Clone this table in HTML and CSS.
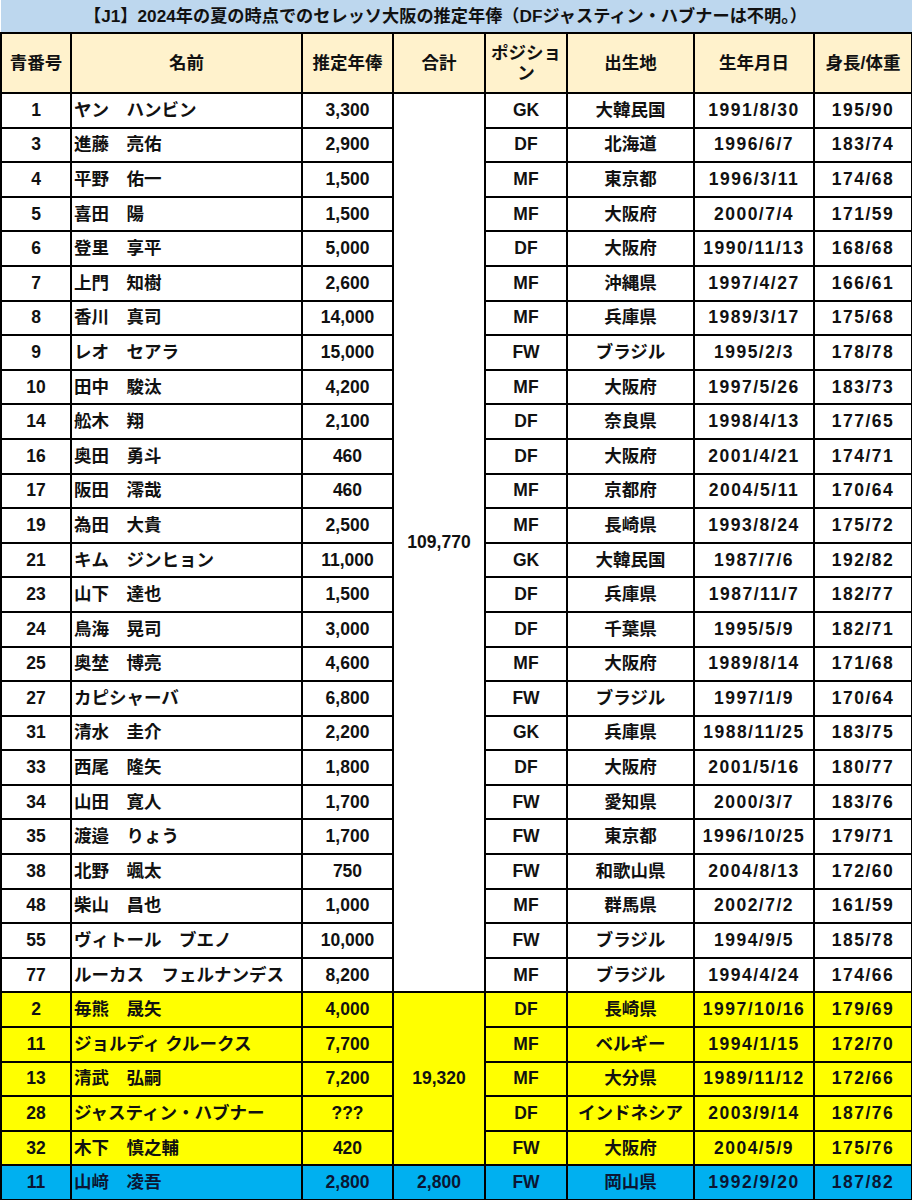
FILE: index.html
```html
<!DOCTYPE html>
<html lang="ja">
<head>
<meta charset="utf-8">
<title>セレッソ大阪 推定年俸</title>
<link rel="stylesheet" href="styles.css">
</head>
<body>
<table class="sheet">
<colgroup>
<col class="c1"><col class="c2"><col class="c3"><col class="c4"><col class="c5"><col class="c6"><col class="c7"><col class="c8">
</colgroup>
<thead>
<tr class="title-row"><th colspan="8" class="title">【J1】2024年の夏の時点でのセレッソ大阪の推定年俸（DFジャスティン・ハブナーは不明。）</th></tr>
<tr class="head-row">
<th>青番号</th><th>名前</th><th>推定年俸</th><th>合計</th><th class="pos">ポジショ<br>ン</th><th>出生地</th><th>生年月日</th><th>身長/体重</th>
</tr>
</thead>
<tbody>
<tr><td>1</td><td class="name">ヤン　ハンビン</td><td>3,300</td><td rowspan="26" class="total">109,770</td><td>GK</td><td>大韓民国</td><td class="num">1991/8/30</td><td class="num">195/90</td></tr>
<tr><td>3</td><td class="name">進藤　亮佑</td><td>2,900</td><td>DF</td><td>北海道</td><td class="num">1996/6/7</td><td class="num">183/74</td></tr>
<tr><td>4</td><td class="name">平野　佑一</td><td>1,500</td><td>MF</td><td>東京都</td><td class="num">1996/3/11</td><td class="num">174/68</td></tr>
<tr><td>5</td><td class="name">喜田　陽</td><td>1,500</td><td>MF</td><td>大阪府</td><td class="num">2000/7/4</td><td class="num">171/59</td></tr>
<tr><td>6</td><td class="name">登里　享平</td><td>5,000</td><td>DF</td><td>大阪府</td><td class="num">1990/11/13</td><td class="num">168/68</td></tr>
<tr><td>7</td><td class="name">上門　知樹</td><td>2,600</td><td>MF</td><td>沖縄県</td><td class="num">1997/4/27</td><td class="num">166/61</td></tr>
<tr><td>8</td><td class="name">香川　真司</td><td>14,000</td><td>MF</td><td>兵庫県</td><td class="num">1989/3/17</td><td class="num">175/68</td></tr>
<tr><td>9</td><td class="name">レオ　セアラ</td><td>15,000</td><td>FW</td><td>ブラジル</td><td class="num">1995/2/3</td><td class="num">178/78</td></tr>
<tr><td>10</td><td class="name">田中　駿汰</td><td>4,200</td><td>MF</td><td>大阪府</td><td class="num">1997/5/26</td><td class="num">183/73</td></tr>
<tr><td>14</td><td class="name">舩木　翔</td><td>2,100</td><td>DF</td><td>奈良県</td><td class="num">1998/4/13</td><td class="num">177/65</td></tr>
<tr><td>16</td><td class="name">奥田　勇斗</td><td>460</td><td>DF</td><td>大阪府</td><td class="num">2001/4/21</td><td class="num">174/71</td></tr>
<tr><td>17</td><td class="name">阪田　澪哉</td><td>460</td><td>MF</td><td>京都府</td><td class="num">2004/5/11</td><td class="num">170/64</td></tr>
<tr><td>19</td><td class="name">為田　大貴</td><td>2,500</td><td>MF</td><td>長崎県</td><td class="num">1993/8/24</td><td class="num">175/72</td></tr>
<tr><td>21</td><td class="name">キム　ジンヒョン</td><td>11,000</td><td>GK</td><td>大韓民国</td><td class="num">1987/7/6</td><td class="num">192/82</td></tr>
<tr><td>23</td><td class="name">山下　達也</td><td>1,500</td><td>DF</td><td>兵庫県</td><td class="num">1987/11/7</td><td class="num">182/77</td></tr>
<tr><td>24</td><td class="name">鳥海　晃司</td><td>3,000</td><td>DF</td><td>千葉県</td><td class="num">1995/5/9</td><td class="num">182/71</td></tr>
<tr><td>25</td><td class="name">奥埜　博亮</td><td>4,600</td><td>MF</td><td>大阪府</td><td class="num">1989/8/14</td><td class="num">171/68</td></tr>
<tr><td>27</td><td class="name">カピシャーバ</td><td>6,800</td><td>FW</td><td>ブラジル</td><td class="num">1997/1/9</td><td class="num">170/64</td></tr>
<tr><td>31</td><td class="name">清水　圭介</td><td>2,200</td><td>GK</td><td>兵庫県</td><td class="num">1988/11/25</td><td class="num">183/75</td></tr>
<tr><td>33</td><td class="name">西尾　隆矢</td><td>1,800</td><td>DF</td><td>大阪府</td><td class="num">2001/5/16</td><td class="num">180/77</td></tr>
<tr><td>34</td><td class="name">山田　寛人</td><td>1,700</td><td>FW</td><td>愛知県</td><td class="num">2000/3/7</td><td class="num">183/76</td></tr>
<tr><td>35</td><td class="name">渡邉　りょう</td><td>1,700</td><td>FW</td><td>東京都</td><td class="num">1996/10/25</td><td class="num">179/71</td></tr>
<tr><td>38</td><td class="name">北野　颯太</td><td>750</td><td>FW</td><td>和歌山県</td><td class="num">2004/8/13</td><td class="num">172/60</td></tr>
<tr><td>48</td><td class="name">柴山　昌也</td><td>1,000</td><td>MF</td><td>群馬県</td><td class="num">2002/7/2</td><td class="num">161/59</td></tr>
<tr><td>55</td><td class="name">ヴィトール　ブエノ</td><td>10,000</td><td>FW</td><td>ブラジル</td><td class="num">1994/9/5</td><td class="num">185/78</td></tr>
<tr><td>77</td><td class="name">ルーカス　フェルナンデス</td><td>8,200</td><td>MF</td><td>ブラジル</td><td class="num">1994/4/24</td><td class="num">174/66</td></tr>
<tr class="new"><td>2</td><td class="name">毎熊　晟矢</td><td>4,000</td><td rowspan="5" class="total">19,320</td><td>DF</td><td>長崎県</td><td class="num">1997/10/16</td><td class="num">179/69</td></tr>
<tr class="new"><td>11</td><td class="name">ジョルディ クルークス</td><td>7,700</td><td>MF</td><td>ベルギー</td><td class="num">1994/1/15</td><td class="num">172/70</td></tr>
<tr class="new"><td>13</td><td class="name">清武　弘嗣</td><td>7,200</td><td>MF</td><td>大分県</td><td class="num">1989/11/12</td><td class="num">172/66</td></tr>
<tr class="new"><td>28</td><td class="name">ジャスティン・ハブナー</td><td>???</td><td>DF</td><td>インドネシア</td><td class="num">2003/9/14</td><td class="num">187/76</td></tr>
<tr class="new"><td>32</td><td class="name">木下　慎之輔</td><td>420</td><td>FW</td><td>大阪府</td><td class="num">2004/5/9</td><td class="num">175/76</td></tr>
<tr class="loan"><td>11</td><td class="name">山﨑　凌吾</td><td>2,800</td><td class="total">2,800</td><td>FW</td><td>岡山県</td><td class="num">1992/9/20</td><td class="num">187/82</td></tr>
</tbody>
</table>
</body>
</html>
```

FILE: styles.css
```css
html, body {
  margin: 0;
  padding: 0;
  background: #ffffff;
}

body {
  font-family: "Liberation Sans", "Noto Sans CJK JP", sans-serif;
  font-weight: bold;
  color: #111111;
}

.sheet {
  border-collapse: collapse;
  table-layout: fixed;
  width: 911px;
}

.c1 { width: 70px; }
.c2 { width: 231px; }
.c3 { width: 91px; }
.c4 { width: 92px; }
.c5 { width: 82px; }
.c6 { width: 127px; }
.c7 { width: 120px; }
.c8 { width: 98px; }

.sheet th,
.sheet td {
  border: 2px solid #000000;
  padding: 0;
  text-align: center;
  vertical-align: middle;
  font-size: 17.5px;
  line-height: 1.2;
  white-space: nowrap;
  overflow: hidden;
}

.title-row th.title {
  height: 32px;
  background: #bdd7ee;
  border-top: none;
  border-left: none;
  border-right: none;
  font-size: 17.2px;
  padding-right: 22px;
}

.head-row th {
  height: 58px;
  background: #fff2cc;
}

.head-row th.pos {
  line-height: 1.15;
}

.sheet tbody tr {
  height: 34.6px;
}

.sheet td.name {
  text-align: left;
  padding-left: 2px;
}

.sheet td.num {
  letter-spacing: 1.5px;
}

.new td {
  background: #ffff00;
}

.loan td {
  background: #00b0f0;
  color: #0b1633;
}
```
